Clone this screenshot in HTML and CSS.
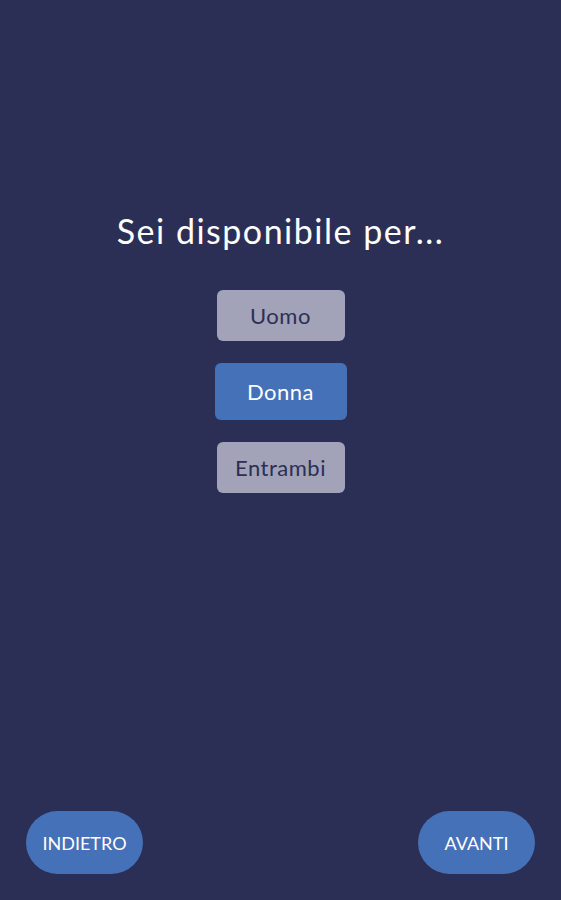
FILE: index.html
```html
<!DOCTYPE html>
<html lang="it">
<head>
    <meta charset="UTF-8">
    <meta name="viewport" content="width=device-width, initial-scale=1.0">
    <title>Preferenze</title>
    <link rel="stylesheet" href="styles.css">
</head>
<body>
    <div class="screen">
        <div class="content">
            <h1>Sei disponibile per...</h1>
            <div class="options">
                <button class="option">Uomo</button>
                <button class="option selected">Donna</button>
                <button class="option">Entrambi</button>
            </div>
        </div>
        <div class="nav">
            <button class="nav-btn">INDIETRO</button>
            <button class="nav-btn">AVANTI</button>
        </div>
    </div>
</body>
</html>
```

FILE: styles.css
```css
body {
    margin: 0;
    background: #2c2f55;
    font-family: 'Lato', 'Noto Sans', sans-serif;
}
.screen {
    height: 900px;
    display: flex;
    flex-direction: column;
    justify-content: space-between;
}
.content {
    padding-top: 210px;
    text-align: center;
}
h1 {
    margin: 0 0 39px;
    font-size: 34px;
    font-weight: 400;
    color: #ffffff;
    letter-spacing: 1.5px;
}
.options {
    display: flex;
    flex-direction: column;
    align-items: center;
    gap: 22px;
}
.option {
    width: 128px;
    height: 51px;
    border: none;
    border-radius: 6px;
    background: #a2a3b8;
    color: #2c2f55;
    font-family: 'Lato', 'Noto Sans', sans-serif;
    font-size: 22px;
    letter-spacing: 0.5px;
    padding: 0;
}
.option.selected {
    width: 132px;
    height: 57px;
    background: #4471b7;
    color: #ffffff;
}
.nav {
    display: flex;
    justify-content: space-between;
    padding: 0 26px 26px;
}
.nav-btn {
    width: 117px;
    height: 63px;
    border: none;
    border-radius: 32px;
    background: #4471b7;
    color: #ffffff;
    font-family: 'Lato', 'Noto Sans', sans-serif;
    font-size: 18px;
    padding: 0;
}
```
